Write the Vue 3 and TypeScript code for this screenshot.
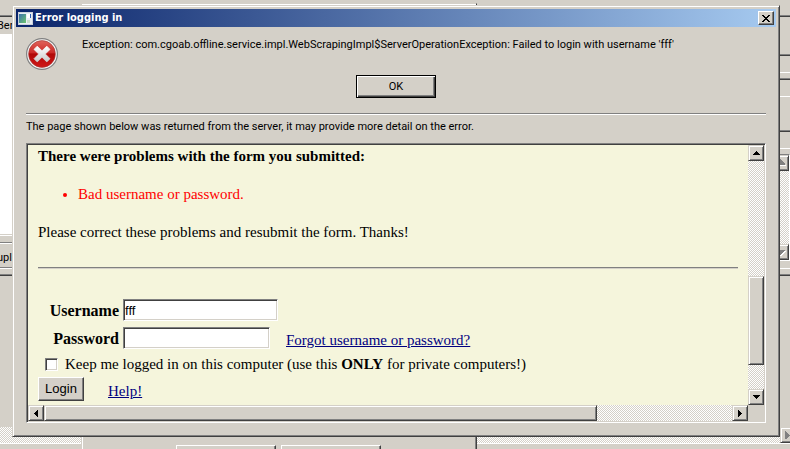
<script setup lang="ts">
import { ref } from 'vue'

const message = "Exception: com.cgoab.offline.service.impl.WebScrapingImpl$ServerOperationException: Failed to login with username 'fff'"
const username = ref<string>('fff')
const password = ref<string>('')
const keepLoggedIn = ref<boolean>(false)
const horizontal = { thumb: 553, rest: 135 }
const vertical = { before: 116, thumb: 88, rest: 24 }
</script>

<template>
  <div class="desktop">
    <div class="backdrop">
      <div class="backdrop-columns">
        <div class="left-edge">
          <div class="tab-head"><span>Ber</span></div>
          <div class="list"></div>
          <div class="gap"></div>
          <div class="group"><span>upl</span></div>
          <div class="pane"></div>
        </div>
        <div class="right-edge">
          <div class="toolbar"></div>
          <div class="field first"></div>
          <div class="field second"></div>
          <div class="field third"></div>
          <div class="side-scroll">
            <div class="bar-button edge-button">
              <svg viewBox="0 0 8 10" width="8" height="10"><path d="M0 1h1v1h1v1h1v1h1v1h1v2H0z" fill="#808080" /><path d="M0 7h6v1H0z" fill="#fff" /></svg>
            </div>
            <div class="dither track"></div>
            <div class="bar-button edge-button">
              <svg viewBox="0 0 8 10" width="8" height="10"><path d="M0 3h5v1H4v1H3v1H2v1H1v1H0z" fill="#808080" /><path d="M5 4h1v1H5v1H4v1H3v1H2v1H0V8h1V7h1V6h1V5h1V4z" fill="#fff" /></svg>
            </div>
          </div>
          <div class="side-foot"></div>
          <div class="pane"></div>
        </div>
      </div>
      <div class="bottom-scroll">
        <div class="dither track"></div>
        <div class="bar-button bottom-button">
          <svg viewBox="0 0 8 10" width="8" height="10"><path d="M3 1h1v1h1v1h1v1h1v1h1v1H7v1H6v1H5v1H3z" fill="#808080" /></svg>
        </div>
      </div>
      <div class="status"></div>
    </div>
    <div class="middle-window">
      <div class="middle-buttons">
        <div class="stub"></div>
        <div class="stub"></div>
      </div>
    </div>

    <section class="dialog" role="dialog" aria-labelledby="dialog-title">
      <header class="title-bar">
        <svg class="app-icon" viewBox="0 0 15 13" width="15" height="13">
          <defs>
            <linearGradient id="screen" x1="0" y1="0" x2="1" y2="1">
              <stop offset="0" stop-color="#3b6fae" />
              <stop offset="1" stop-color="#6cc66c" />
            </linearGradient>
          </defs>
          <rect width="15" height="13" fill="#e9eef4" />
          <rect x=".5" y=".5" width="14" height="12" fill="none" stroke="#cbd2dc" />
          <rect x="1" y="2" width="7" height="9" fill="url(#screen)" />
          <rect x="9" y="2" width="3" height="4" fill="#fff" />
          <rect x="12" y="2" width="1" height="4" fill="#285fb2" />
          <rect x="9" y="8" width="3" height="3" fill="#c8dccb" />
        </svg>
        <h1 id="dialog-title">Error logging in</h1>
        <button class="close" type="button" aria-label="Close">
          <svg viewBox="0 0 8 7" width="8" height="7" shape-rendering="crispEdges"><path d="M0 0h2v1h1v1h2V1h1V0h2v1H7v1H6v1H5v1h1v1h1v1h1v1H6V6H5V5H3v1H2v1H0V6h1V5h1V4h1V3H2V2H1V1H0z" fill="#000" /></svg>
        </button>
      </header>

      <div class="body">
        <div class="summary">
          <svg class="error-icon" viewBox="0 0 32 32" width="32" height="32">
            <defs>
              <linearGradient id="red" x1="0" y1="0" x2="0" y2="1">
                <stop offset="0" stop-color="#e0645c" />
                <stop offset=".45" stop-color="#cc2a28" />
                <stop offset=".5" stop-color="#b00808" />
                <stop offset="1" stop-color="#d01818" />
              </linearGradient>
              <linearGradient id="silver" x1="0" y1="0" x2="0" y2="1">
                <stop offset="0" stop-color="#fff" />
                <stop offset="1" stop-color="#c9c9c9" />
              </linearGradient>
            </defs>
            <circle cx="16" cy="16" r="15.4" fill="#f4f4f4" stroke="#808080" stroke-width="1.2" />
            <circle cx="16" cy="16" r="13.4" fill="url(#red)" stroke="#a33a38" stroke-width=".6" />
            <path d="M11.2 8.2 16 12.8l4.8-4.6 3.2 3.2-4.7 4.6 4.7 4.7-3.2 3.2-4.8-4.7-4.8 4.7L8 20.7l4.7-4.7L8 11.4z" fill="url(#silver)" stroke="url(#silver)" stroke-width=".8" stroke-linejoin="round" />
          </svg>
          <p class="message">{{ message }}</p>
        </div>
        <div class="actions"><button class="ok" type="button">OK</button></div>
        <hr class="separator">
        <p class="note">The page shown below was returned from the server, it may provide more detail on the error.</p>

        <div class="frame">
          <div class="page">
            <strong class="heading">There were problems with the form you submitted:</strong>
            <ul class="problems"><li>Bad username or password.</li></ul>
            <p class="advice">Please correct these problems and resubmit the form. Thanks!</p>
            <hr class="rule">
            <form class="login" @submit.prevent>
              <div class="row">
                <label for="username">Username</label>
                <input id="username" v-model="username" class="text-box wide" type="text">
              </div>
              <div class="row">
                <label for="password">Password</label>
                <input id="password" v-model="password" class="text-box" type="password">
                <a class="forgot" href="#">Forgot username or password?</a>
              </div>
              <div class="keep">
                <input id="keep" v-model="keepLoggedIn" type="checkbox">
                <label for="keep">Keep me logged in on this computer (use this <b>ONLY</b> for private computers!)</label>
              </div>
              <div class="submit">
                <button class="login-button" type="submit">Login</button>
                <a href="#">Help!</a>
              </div>
            </form>
          </div>
          <div class="v-scroll">
            <button class="bar-button" type="button" aria-label="Scroll up">
              <svg viewBox="0 0 7 4" width="7" height="4" shape-rendering="crispEdges"><path d="M3 0h1v1h1v1h1v1h1v1H0V3h1V2h1V1h1z" /></svg>
            </button>
            <div class="dither" :style="{ flexGrow: vertical.before }"></div>
            <div class="thumb" :style="{ flexGrow: vertical.thumb }"></div>
            <div class="dither" :style="{ flexGrow: vertical.rest }"></div>
            <button class="bar-button" type="button" aria-label="Scroll down">
              <svg viewBox="0 0 7 4" width="7" height="4" shape-rendering="crispEdges"><path d="M0 0h7v1H6v1H5v1H4v1H3V3H2V2H1V1H0z" /></svg>
            </button>
          </div>
          <div class="h-scroll">
            <button class="bar-button" type="button" aria-label="Scroll left">
              <svg viewBox="0 0 4 7" width="4" height="7" shape-rendering="crispEdges"><path d="M4 0v7H3V6H2V5H1V4H0V3h1V2h1V1h1V0z" /></svg>
            </button>
            <div class="thumb" :style="{ flexGrow: horizontal.thumb }"></div>
            <div class="dither" :style="{ flexGrow: horizontal.rest }"></div>
            <button class="bar-button" type="button" aria-label="Scroll right">
              <svg viewBox="0 0 4 7" width="4" height="7" shape-rendering="crispEdges"><path d="M0 0h1v1h1v1h1v1h1v1H3v1H2v1H1v1H0z" /></svg>
            </button>
          </div>
        </div>
      </div>
    </section>
  </div>
</template>

<style>
body {
  background: #d4d0c8;
}
</style>

<style scoped>
* {
  box-sizing: border-box;
}

.desktop {
  position: relative;
  display: flex;
  min-height: 100vh;
  padding: 5px 10px 12px 12px;
  overflow: hidden;
  background: #d4d0c8;
  color: #000;
  font-family: Roboto, Tahoma, sans-serif;
  font-size: 11px;
}

.dither {
  background: repeating-conic-gradient(#fff 0 25%, #d4d0c8 0 50%) 0 0 / 2px 2px;
}

.track {
  flex: 1;
}

/* Application window behind the dialog */
.backdrop {
  position: absolute;
  inset: 0;
  display: flex;
  flex-direction: column;
}

.backdrop-columns {
  flex: 1;
  display: flex;
  justify-content: space-between;
}

.left-edge,
.right-edge {
  display: flex;
  flex-direction: column;
  padding-top: 15px;
}

.left-edge {
  width: 12px;
}

.left-edge span {
  display: block;
  margin-left: -3px;
}

.right-edge {
  width: 10px;
}

.tab-head {
  height: 19px;
  border-top: 1px solid #808080;
  box-shadow: inset 0 1px #404040;
  line-height: 20px;
}

.list {
  height: 200px;
  background: #fff;
}

.gap {
  height: 8px;
  border-top: 1px solid #d4d0c8;
  box-shadow: inset 0 1px #fff;
}

.group {
  height: 26px;
  margin-bottom: 6px;
  border-top: 1px solid #808080;
  border-bottom: 1px solid #808080;
  box-shadow: inset 0 1px #fff, 0 1px #fff;
  line-height: 30px;
}

.pane {
  flex: 1;
  border-top: 1px solid #808080;
  box-shadow: inset 0 1px #404040;
}

.toolbar {
  height: 39px;
  border-top: 1px solid #808080;
  box-shadow: inset 0 1px #404040;
}

.field {
  height: 19px;
  border-top: 1px solid #808080;
  border-bottom: 1px solid #fff;
  box-shadow: inset 0 1px #404040;
}

.field.first {
  margin-bottom: 5px;
}

.field.second {
  margin-bottom: 33px;
}

.field.third {
  margin-bottom: 5px;
}

.side-scroll {
  display: flex;
  flex-direction: column;
  height: 107px;
  border-top: 1px solid #808080;
  border-right: 1px solid #fff;
  border-bottom: 1px solid #fff;
  box-shadow: inset 0 1px #404040;
}

.side-foot {
  height: 8px;
  margin-bottom: 5px;
  border-bottom: 1px solid #fff;
}

.bottom-scroll {
  display: flex;
  height: 16px;
}

.status {
  height: 6px;
  border-top: 1px solid #fff;
}

.middle-window {
  position: absolute;
  left: 81px;
  top: 3px;
  bottom: -2px;
  display: flex;
  align-items: flex-end;
  width: 396px;
  padding-left: 94px;
  background: #d4d0c8;
  border: 1px solid #d4d0c8;
  border-right-color: #404040;
  box-shadow: inset 1px 1px #fff, inset -1px 0 #808080;
}

.middle-buttons {
  display: flex;
  gap: 5px;
}

.stub {
  width: 100px;
  height: 5px;
  border: 1px solid #fff;
  border-right-color: #404040;
  border-bottom: 0;
  box-shadow: inset -1px 0 #808080;
}

/* Raised controls */
.bar-button,
.thumb {
  background: #d4d0c8;
  border: 1px solid #d4d0c8;
  border-right-color: #404040;
  border-bottom-color: #404040;
  box-shadow: inset 1px 1px #fff, inset -1px -1px #808080;
}

.bar-button {
  flex: none;
  display: flex;
  align-items: center;
  justify-content: center;
  width: 16px;
  height: 16px;
  padding: 0;
}

.edge-button {
  width: 9px;
  border-left: 0;
  justify-content: flex-start;
  box-shadow: inset 0 1px #fff, inset -1px -1px #808080;
}

.bottom-button {
  width: 10px;
  border-right: 0;
  box-shadow: inset 1px 1px #fff, inset 0 -1px #808080;
}

/* Dialog */
.dialog {
  position: relative;
  flex: 1;
  display: flex;
  flex-direction: column;
  min-width: 0;
  padding: 3px;
  background: #d4d0c8;
  border: 1px solid #d4d0c8;
  border-right-color: #404040;
  border-bottom-color: #404040;
  box-shadow: inset 1px 1px #fff, inset -1px -1px #808080;
}

.title-bar {
  display: flex;
  align-items: center;
  gap: 2px;
  height: 18px;
  padding: 0 2px;
  background: linear-gradient(to right, #0a246a, #a6caf0);
}

h1 {
  flex: 1;
  margin: 0;
  color: #fff;
  font: bold 11px/18px "DejaVu Sans Condensed", Tahoma, sans-serif;
}

.close {
  display: flex;
  align-items: center;
  justify-content: center;
  width: 16px;
  height: 14px;
  padding: 0;
  background: #d4d0c8;
  border: 1px solid #fff;
  border-right-color: #404040;
  border-bottom-color: #404040;
  box-shadow: inset -1px -1px #808080;
}

.body {
  flex: 1;
  display: flex;
  flex-direction: column;
  padding: 11px 10px 10px;
}

.summary {
  display: flex;
  gap: 24px;
}

.message,
.note {
  margin: 0;
  line-height: 14px;
}

.actions {
  display: flex;
  justify-content: center;
  padding: 5px 0 15px;
}

.ok {
  width: 80px;
  height: 23px;
  padding: 0;
  background: #d4d0c8;
  border: 1px solid #000;
  box-shadow: inset 1px 1px #fff, inset -1px -1px #404040, inset -2px -2px #808080;
  color: #000;
  font: inherit;
}

.separator {
  width: 100%;
  height: 2px;
  margin: 0 0 5px;
  border: 0;
  border-top: 1px solid #808080;
  border-bottom: 1px solid #fff;
}

.note {
  margin-bottom: 9px;
}

.frame {
  flex: 1;
  display: grid;
  grid-template-columns: 1fr 16px;
  grid-template-rows: 1fr 16px;
  border: 1px solid #808080;
  border-right-color: #fff;
  border-bottom-color: #fff;
  padding: 1px;
  box-shadow: inset 1px 1px #404040, inset -1px -1px #d4d0c8;
}

.v-scroll {
  display: flex;
  flex-direction: column;
}

.h-scroll {
  display: flex;
}

/* Returned page */
.page {
  padding: 2px 10px 0;
  overflow: hidden;
  background: #f5f5dc;
  font: 15px/19px "Liberation Serif", "Times New Roman", serif;
}

.heading {
  display: block;
}

.problems {
  margin: 19px 0;
  padding-left: 40px;
  color: #f00;
}

.advice {
  margin: 0 0 25px;
}

.rule {
  height: 2px;
  margin: 0 0 30px;
  border: 0;
  border-top: 1px solid #808080;
  border-bottom: 1px solid #d4d0c8;
}

.row {
  display: flex;
  align-items: center;
  height: 22px;
  margin-bottom: 6px;
}

.row label {
  width: 81px;
  margin-right: 4px;
  font-size: 16px;
  font-weight: bold;
  text-align: right;
}

.text-box {
  width: 147px;
  height: 22px;
  padding: 0 1px;
  background: #fff;
  border: 1px solid #808080;
  border-right-color: #fff;
  border-bottom-color: #fff;
  border-radius: 0;
  outline: 0;
  box-shadow: inset 1px 1px #404040, inset -1px -1px #d4d0c8;
  color: #000;
  font: 13px/18px "Liberation Sans", Arial, sans-serif;
}

.text-box.wide {
  width: 155px;
}

.forgot {
  padding: 4px 0 0 16px;
}

a {
  color: #000080;
}

.keep {
  display: flex;
  align-items: center;
  gap: 7px;
  height: 19px;
  padding-left: 7px;
}

.keep input {
  appearance: none;
  width: 13px;
  height: 13px;
  margin: 0;
  background: #fff;
  border: 1px solid #808080;
  border-right-color: #fff;
  border-bottom-color: #fff;
  box-shadow: inset 1px 1px #404040, inset -1px -1px #d4d0c8;
}

.submit {
  display: flex;
  align-items: center;
  gap: 24px;
  padding-top: 2px;
}

.submit a {
  padding-top: 6px;
}

.login-button {
  width: 46px;
  height: 24px;
  padding: 0;
  background: #d4d0c8;
  border: 1px solid #fff;
  border-right-color: #404040;
  border-bottom-color: #404040;
  box-shadow: inset -1px -1px #808080;
  color: #000;
  font: 13px/20px "Liberation Sans", Arial, sans-serif;
}
</style>
